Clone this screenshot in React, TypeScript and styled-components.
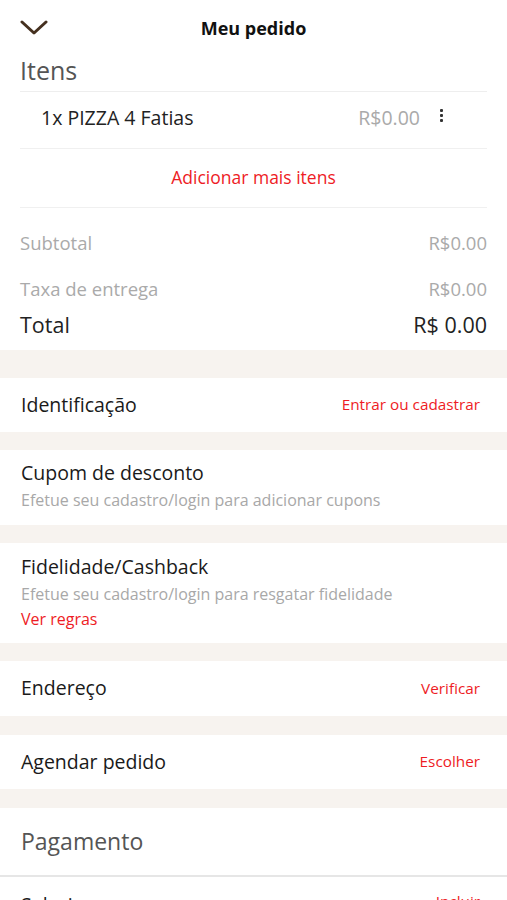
import React from 'react';
import styled, { createGlobalStyle } from 'styled-components';

const GlobalStyle = createGlobalStyle`
  body {
    margin: 0;
    background: #ffffff;
    font-family: 'Open Sans', 'Noto Sans', sans-serif;
  }
`;

const Page = styled.div`
  width: 507px;
  height: 900px;
  overflow: hidden;
  background: #ffffff;
`;

const Header = styled.div`
  height: 50px;
  display: flex;
  align-items: center;
  justify-content: center;
  position: relative;
  padding: 0 20px;
  box-sizing: border-box;

  .back {
    position: absolute;
    left: 20px;
    top: 20px;
  }

  h1 {
    margin: 0;
    font-size: 18px;
    font-weight: 700;
    color: #111111;
    margin-top: 6px;
  }
`;

const Section = styled.div`
  padding: 0 20px;
`;

const SectionTitle = styled.div`
  font-size: 25px;
  color: #555555;
  height: 41px;
  line-height: 40px;
  border-bottom: 1px solid #eeeeee;
`;

const ItemRow = styled.div`
  height: 57px;
  display: flex;
  align-items: center;
  padding-left: 21px;
  padding-bottom: 6px;
  box-sizing: border-box;
  border-bottom: 1px solid #f0f0f0;

  .name {
    flex: 1;
    font-size: 19.5px;
    color: #222222;
  }

  .price {
    font-size: 19.5px;
    color: #aaaaaa;
    margin-right: 16px;
  }

  .more {
    width: 10px;
    display: flex;
    flex-direction: column;
    align-items: center;
    gap: 2px;
    margin-right: 41px;
    margin-top: -4px;

    span {
      width: 3px;
      height: 3px;
      background: #333333;
      border-radius: 1px;
    }
  }
`;

const AddMore = styled.div`
  height: 59px;
  display: flex;
  align-items: center;
  justify-content: center;
  padding-bottom: 2px;
  box-sizing: border-box;
  font-size: 17.5px;
  color: #ee1c25;
  border-bottom: 1px solid #f0f0f0;
`;

const Totals = styled.div`
  padding: 12px 0 14px;
`;

const TotalLine = styled.div<{ $strong?: boolean; $h: number }>`
  display: flex;
  justify-content: space-between;
  align-items: center;
  height: ${(p) => p.$h}px;
  font-size: ${(p) => (p.$strong ? 21.5 : 18.5)}px;
  color: ${(p) => (p.$strong ? '#222222' : '#aaaaaa')};
`;

const Band = styled.div<{ $h: number }>`
  height: ${(p) => p.$h}px;
  background: #f7f3ef;
`;

const Row = styled.div<{ $h?: number }>`
  height: ${(p) => p.$h ?? 54}px;
  display: flex;
  align-items: center;
  justify-content: space-between;
  padding: 0 27px 2px 21px;
  box-sizing: border-box;
  font-size: 19.5px;
  color: #1a1a1a;
`;

const Link = styled.span`
  font-size: 15.3px;
  color: #ee1c25;
`;

const Block = styled.div<{ $pad: string }>`
  padding: ${(p) => p.$pad};

  .title {
    font-size: 19.5px;
    color: #1a1a1a;
    line-height: 24px;
  }

  .sub {
    font-size: 16px;
    color: #a8a8a8;
    line-height: 20px;
    margin-top: 5px;
  }

  .rules {
    font-size: 16px;
    color: #ee1c25;
    line-height: 20px;
    margin-top: 5px;
  }
`;

const PayTitle = styled.div`
  height: 69px;
  display: flex;
  align-items: center;
  padding-left: 21px;
  padding-bottom: 2px;
  font-size: 23px;
  color: #555555;
  border-bottom: 2px solid #e6e6e6;
  box-sizing: border-box;
`;

const PayRow = styled(Row)`
  align-items: flex-start;
  padding-top: 14px;
`;

function Chevron() {
  return (
    <svg className="back" width="28" height="16" viewBox="0 0 28 16">
      <path d="M2 2 L14 13 L26 2" fill="none" stroke="#45301f" strokeWidth="3" strokeLinecap="round" strokeLinejoin="round" />
    </svg>
  );
}

export default function App() {
  return (
    <Page>
      <GlobalStyle />
      <Header>
        <Chevron />
        <h1>Meu pedido</h1>
      </Header>
      <Section>
        <SectionTitle>Itens</SectionTitle>
        <ItemRow>
          <div className="name">1x PIZZA 4 Fatias</div>
          <div className="price">R$0.00</div>
          <div className="more">
            <span />
            <span />
            <span />
          </div>
        </ItemRow>
        <AddMore>Adicionar mais itens</AddMore>
        <Totals>
          <TotalLine $h={44}>
            <span>Subtotal</span>
            <span>R$0.00</span>
          </TotalLine>
          <TotalLine $h={48}>
            <span>Taxa de entrega</span>
            <span>R$0.00</span>
          </TotalLine>
          <TotalLine $h={24} $strong>
            <span>Total</span>
            <span>R$ 0.00</span>
          </TotalLine>
        </Totals>
      </Section>
      <Band $h={28} />
      <Row>
        <span>Identificação</span>
        <Link>Entrar ou cadastrar</Link>
      </Row>
      <Band $h={18} />
      <Block $pad="11px 21px 15px">
        <div className="title">Cupom de desconto</div>
        <div className="sub">Efetue seu cadastro/login para adicionar cupons</div>
      </Block>
      <Band $h={18} />
      <Block $pad="12px 21px 14px">
        <div className="title">Fidelidade/Cashback</div>
        <div className="sub">Efetue seu cadastro/login para resgatar fidelidade</div>
        <div className="rules">Ver regras</div>
      </Block>
      <Band $h={18} />
      <Row $h={55}>
        <span>Endereço</span>
        <Link>Verificar</Link>
      </Row>
      <Band $h={19} />
      <Row>
        <span>Agendar pedido</span>
        <Link>Escolher</Link>
      </Row>
      <Band $h={19} />
      <PayTitle>Pagamento</PayTitle>
      <PayRow>
        <span>Selecionar</span>
        <Link>Incluir</Link>
      </PayRow>
    </Page>
  );
}
